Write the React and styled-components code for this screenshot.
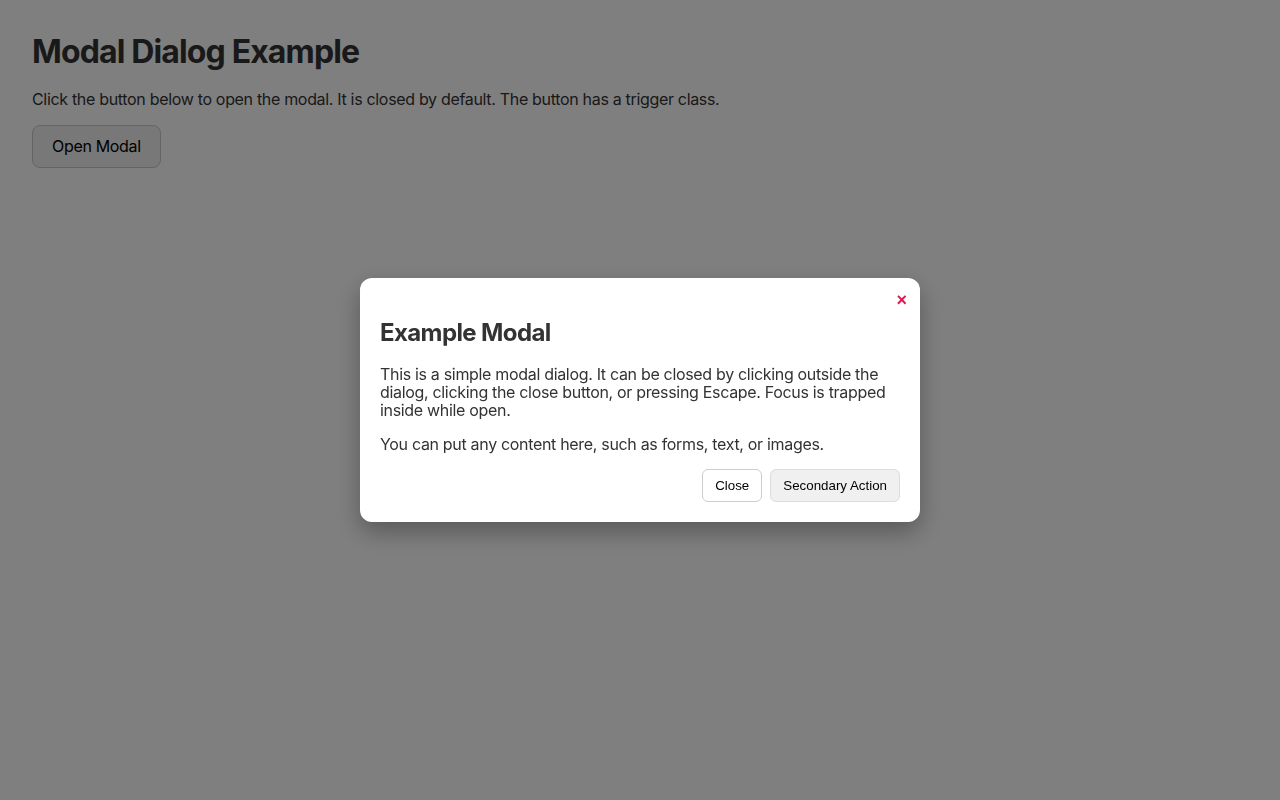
import React from "react";
import styled, { createGlobalStyle } from "styled-components";

const GlobalStyle = createGlobalStyle`
  html, body { margin: 0; padding: 0; background: #fff; }
  body {
    font-family: Inter, "Noto Sans", sans-serif;
    color: #333;
    line-height: 1.15;
    letter-spacing: -0.02em;
  }
`;

const Page = styled.main`
  padding: 32px;
  min-height: 800px;
  box-sizing: border-box;
`;

const Title = styled.h1`
  margin: 0 0 19px;
  font-size: 32px;
  font-weight: 700;
  line-height: 39px;
  letter-spacing: -0.027em;
`;

const Lead = styled.p`
  margin: 0 0 16px;
  font-size: 16px;
  line-height: 19px;
`;

const TriggerButton = styled.button`
  font-family: Inter, "Noto Sans", sans-serif;
  font-size: 16px;
  line-height: 19px;
  letter-spacing: -0.02em;
  color: #000;
  background: #f0f0f0;
  border: 1px solid #c8c8c8;
  border-radius: 8px;
  padding: 11px 19px;
  cursor: pointer;
`;

const Overlay = styled.div`
  position: fixed;
  inset: 0;
  background: rgba(0, 0, 0, 0.5);
  display: flex;
  align-items: center;
  justify-content: center;
`;

const Dialog = styled.div`
  position: relative;
  width: 560px;
  box-sizing: border-box;
  background: #fff;
  border-radius: 12px;
  padding: 20px;
  box-shadow: 0 10px 25px rgba(0, 0, 0, 0.3);
`;

const CloseX = styled.button`
  position: absolute;
  top: 11px;
  right: 9px;
  background: none;
  border: none;
  padding: 2px 4px;
  font-family: "Liberation Sans", Arial, sans-serif;
  font-size: 18px;
  font-weight: 700;
  line-height: 18px;
  letter-spacing: 0;
  color: #e3154f;
  cursor: pointer;
`;

const DialogTitle = styled.h2`
  margin: 20px 0 18px;
  font-size: 24px;
  font-weight: 700;
  line-height: 29px;
  letter-spacing: -0.025em;
`;

const Body = styled.p`
  margin: 0 0 16px;
  font-size: 16px;
  line-height: 18px;
`;

const Actions = styled.div`
  display: flex;
  justify-content: flex-end;
  gap: 8px;
`;

const ActionButton = styled.button`
  font-family: "Liberation Sans", Arial, sans-serif;
  font-size: 13.333px;
  line-height: 15px;
  letter-spacing: 0;
  color: #000;
  padding: 8px 12px;
  border-radius: 6px;
  border: 1px solid ${(p) => (p.$secondary ? "#dddddd" : "#cccccc")};
  background: ${(p) => (p.$secondary ? "#f0f0f0" : "#ffffff")};
  cursor: pointer;
`;

export default function App() {
  return (
    <>
      <GlobalStyle />
      <Page>
        <Title>Modal Dialog Example</Title>
        <Lead>
          Click the button below to open the modal. It is closed by default. The button has a trigger class.
        </Lead>
        <TriggerButton className="trigger">Open Modal</TriggerButton>
      </Page>
      <Overlay>
        <Dialog role="dialog" aria-modal="true">
          <CloseX aria-label="Close">×</CloseX>
          <DialogTitle>Example Modal</DialogTitle>
          <Body>
            This is a simple modal dialog. It can be closed by clicking outside the dialog, clicking the close button, or pressing Escape. Focus is trapped inside while open.
          </Body>
          <Body>You can put any content here, such as forms, text, or images.</Body>
          <Actions>
            <ActionButton>Close</ActionButton>
            <ActionButton $secondary>Secondary Action</ActionButton>
          </Actions>
        </Dialog>
      </Overlay>
    </>
  );
}
